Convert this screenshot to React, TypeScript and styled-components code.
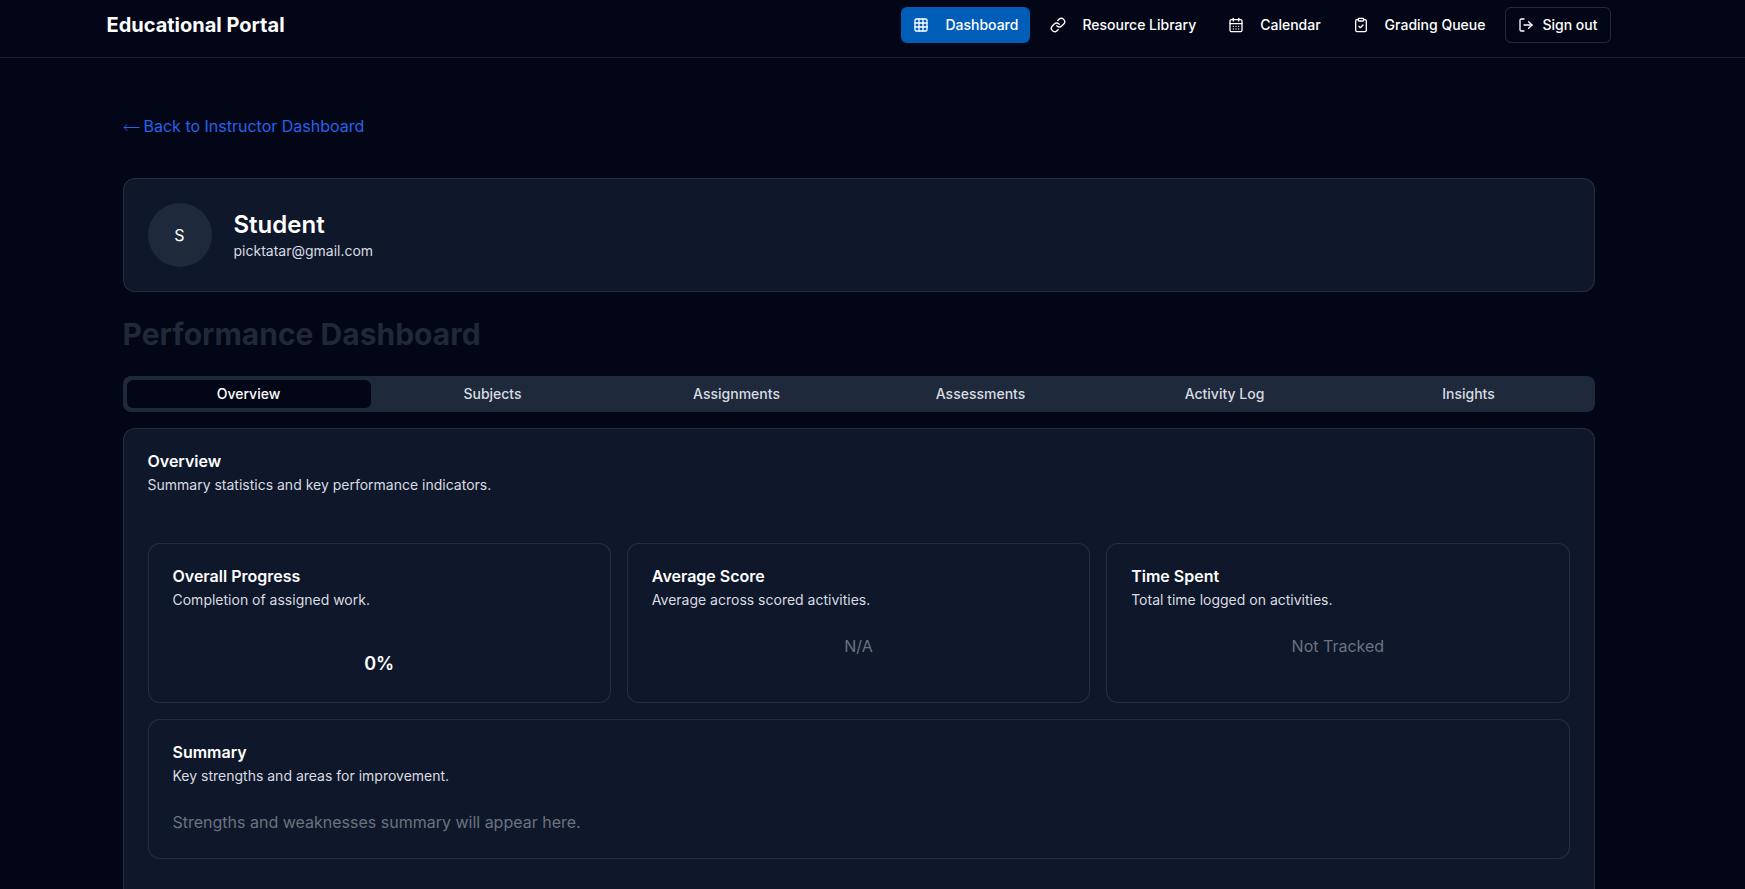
import React, { useState } from "react";
import styled, { createGlobalStyle } from "styled-components";
import { CalendarDays, ClipboardCheck, Grid3x3, Link as LinkIcon, LogOut } from "lucide-react";

const color = {
  page: "#020617",
  card: "#0f172a",
  muted: "#1e293b",
  line: "rgba(255, 255, 255, 0.1)",
  text: "#ffffff",
  soft: "#d9dce1",
  dim: "#6b7280",
  heading: "#1f2937",
  link: "#2563eb",
  active: "#005eb8",
};

const GlobalStyle = createGlobalStyle`
  *, *::before, *::after { box-sizing: border-box; }
  body {
    margin: 0;
    background: ${color.page};
    color: ${color.text};
    font-family: Inter, "Liberation Sans", sans-serif;
    font-size: 16px;
    line-height: 24px;
  }
  h1, h2, h3, p { margin: 0; }
  button { font-family: inherit; }
`;

const Header = styled.header`
  padding: 7px 28px 14px 0;
  border-bottom: 1px solid ${color.line};
`;

const HeaderInner = styled.div`
  display: flex;
  align-items: center;
  justify-content: space-between;
  max-width: 1504px;
  margin: 0 auto;
`;

const Brand = styled.a`
  color: ${color.text};
  font-size: 20px;
  line-height: 28px;
  font-weight: 700;
  text-decoration: none;
`;

const Nav = styled.nav`
  display: flex;
  align-items: center;
  gap: 8px;
`;

const NavLink = styled.a<{ $active?: boolean }>`
  display: flex;
  align-items: center;
  gap: 16px;
  height: 36px;
  padding: 0 12px;
  border-radius: 6px;
  background: ${(p) => (p.$active ? color.active : "transparent")};
  color: ${color.text};
  font-size: 14px;
  line-height: 20px;
  font-weight: 500;
  text-decoration: none;
`;

const SignOut = styled.button`
  display: flex;
  align-items: center;
  gap: 8px;
  height: 36px;
  padding: 0 12px;
  border: 1px solid rgba(255, 255, 255, 0.15);
  border-radius: 6px;
  background: transparent;
  color: ${color.text};
  font-size: 14px;
  line-height: 20px;
  font-weight: 500;
  cursor: pointer;
`;

const Main = styled.main`
  padding: 56px 28px 0 0;
`;

const Content = styled.div`
  max-width: 1472px;
  margin: 0 auto;
`;

const BackLink = styled.a`
  display: flex;
  align-items: center;
  gap: 4px;
  width: fit-content;
  margin-bottom: 40px;
  color: ${color.link};
  text-decoration: none;
`;

const Card = styled.section`
  padding: 24px;
  border: 1px solid ${color.line};
  border-radius: 12px;
  background: ${color.card};
`;

const ProfileCard = styled(Card)`
  display: flex;
  align-items: center;
  gap: 22px;
`;

const Avatar = styled.div`
  display: flex;
  align-items: center;
  justify-content: center;
  width: 64px;
  height: 64px;
  border-radius: 50%;
  background: ${color.muted};
`;

const Name = styled.h2`
  font-size: 24px;
  line-height: 32px;
  font-weight: 600;
`;

const Small = styled.p`
  color: ${color.soft};
  font-size: 14px;
  line-height: 20px;
`;

const PageTitle = styled.h1`
  margin: 24px 0;
  color: ${color.heading};
  font-size: 30px;
  line-height: 36px;
  font-weight: 700;
`;

const TabList = styled.div`
  display: grid;
  grid-template-columns: repeat(6, 1fr);
  padding: 4px;
  margin-bottom: 16px;
  border-radius: 8px;
  background: ${color.muted};
`;

const Tab = styled.button<{ $active: boolean }>`
  height: 28px;
  padding: 0 12px;
  border: 0;
  border-radius: 6px;
  background: ${(p) => (p.$active ? color.page : "transparent")};
  color: ${(p) => (p.$active ? color.text : color.soft)};
  font-size: 14px;
  line-height: 20px;
  font-weight: 500;
  cursor: pointer;
`;

const Panel = styled(Card)`
  border-radius: 12px 12px 0 0;
  padding-bottom: 48px;
`;

const CardHeader = styled.div`
  display: flex;
  flex-direction: column;
  gap: 6px;
  margin-bottom: 24px;
`;

const CardTitle = styled.h3`
  font-size: 16px;
  line-height: 16px;
  font-weight: 600;
`;

const PanelBody = styled.div`
  display: flex;
  flex-direction: column;
  gap: 16px;
  padding-top: 24px;
`;

const Stats = styled.div`
  display: grid;
  grid-template-columns: repeat(3, 1fr);
  gap: 16px;
`;

const Note = styled.p<{ $center?: boolean }>`
  color: ${color.dim};
  text-align: ${(p) => (p.$center ? "center" : "left")};
`;

const Figure = styled.p`
  padding-top: 16px;
  font-size: 18px;
  line-height: 28px;
  font-weight: 600;
  text-align: center;
`;

const tabs = ["Overview", "Subjects", "Assignments", "Assessments", "Activity Log", "Insights"];

function ArrowLeft() {
  return (
    <svg width="17" height="12" viewBox="0 0 17 12" fill="none" stroke="currentColor" aria-hidden="true">
      <path d="M1 7.5H16.5M4 4.5L1 7.5L4 10.5" />
    </svg>
  );
}

function Heading({ title, text }: { title: string; text: string }) {
  return (
    <CardHeader>
      <CardTitle>{title}</CardTitle>
      <Small>{text}</Small>
    </CardHeader>
  );
}

export default function App() {
  const [tab, setTab] = useState("Overview");
  return (
    <>
      <GlobalStyle />
      <Header>
        <HeaderInner>
          <Brand href="#">Educational Portal</Brand>
          <Nav>
            <NavLink href="#" $active aria-current="page"><Grid3x3 size={16} />Dashboard</NavLink>
            <NavLink href="#"><LinkIcon size={16} />Resource Library</NavLink>
            <NavLink href="#"><CalendarDays size={16} />Calendar</NavLink>
            <NavLink href="#"><ClipboardCheck size={16} />Grading Queue</NavLink>
            <SignOut type="button"><LogOut size={16} />Sign out</SignOut>
          </Nav>
        </HeaderInner>
      </Header>
      <Main>
        <Content>
          <BackLink href="#"><ArrowLeft />Back to Instructor Dashboard</BackLink>
          <ProfileCard>
            <Avatar>S</Avatar>
            <div>
              <Name>Student</Name>
              <Small>picktatar@gmail.com</Small>
            </div>
          </ProfileCard>
          <PageTitle>Performance Dashboard</PageTitle>
          <TabList role="tablist">
            {tabs.map((name) => (
              <Tab key={name} type="button" role="tab" aria-selected={tab === name} $active={tab === name} onClick={() => setTab(name)}>
                {name}
              </Tab>
            ))}
          </TabList>
          <Panel role="tabpanel">
            <Heading title="Overview" text="Summary statistics and key performance indicators." />
            <PanelBody>
              <Stats>
                <Card>
                  <Heading title="Overall Progress" text="Completion of assigned work." />
                  <Figure>0%</Figure>
                </Card>
                <Card>
                  <Heading title="Average Score" text="Average across scored activities." />
                  <Note $center>N/A</Note>
                </Card>
                <Card>
                  <Heading title="Time Spent" text="Total time logged on activities." />
                  <Note $center>Not Tracked</Note>
                </Card>
              </Stats>
              <Card>
                <Heading title="Summary" text="Key strengths and areas for improvement." />
                <Note>Strengths and weaknesses summary will appear here.</Note>
              </Card>
            </PanelBody>
          </Panel>
        </Content>
      </Main>
    </>
  );
}
